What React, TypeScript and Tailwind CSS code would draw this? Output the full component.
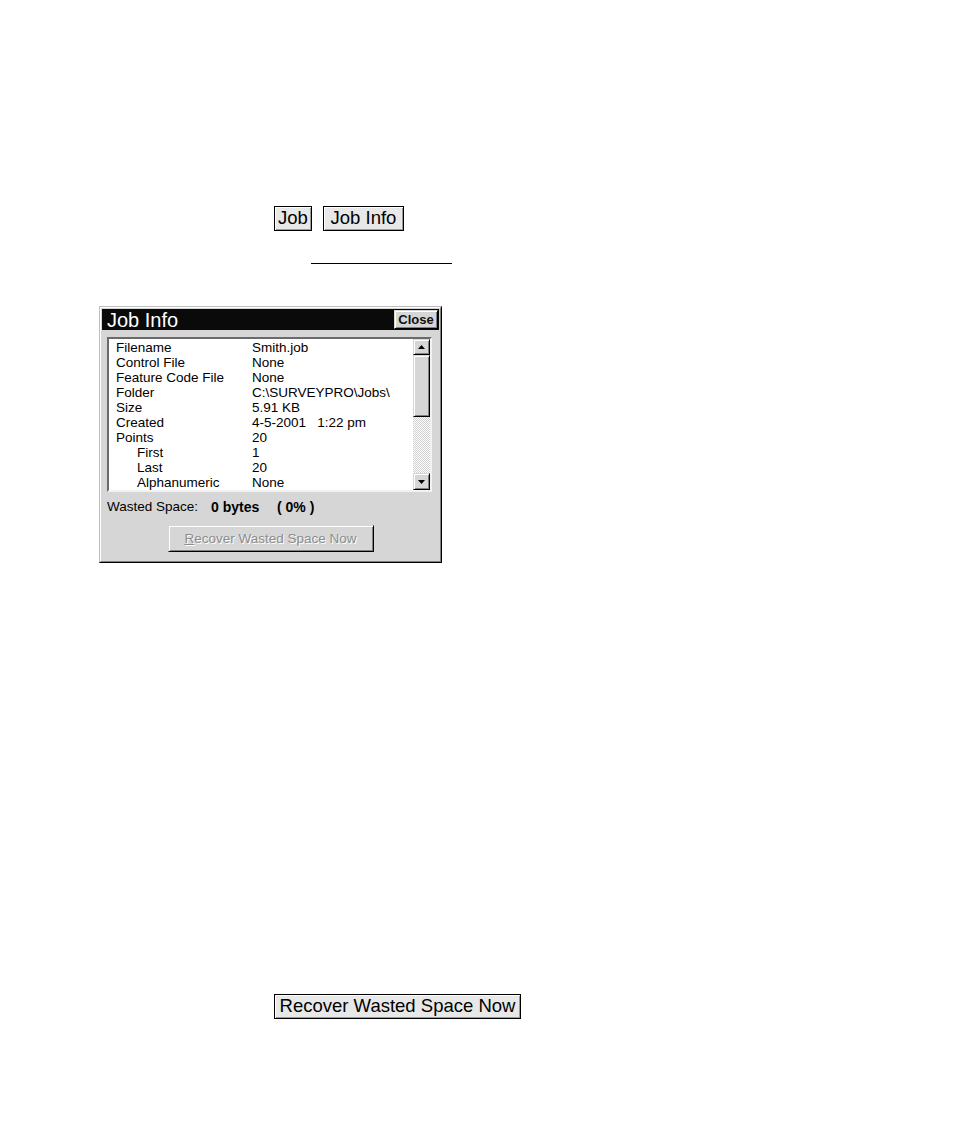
import React from "react";

const rows: [string, string, boolean][] = [
  ["Filename", "Smith.job", false],
  ["Control File", "None", false],
  ["Feature Code File", "None", false],
  ["Folder", "C:\\SURVEYPRO\\Jobs\\", false],
  ["Size", "5.91 KB", false],
  ["Created", "4-5-2001   1:22 pm", false],
  ["Points", "20", false],
  ["First", "1", true],
  ["Last", "20", true],
  ["Alphanumeric", "None", true],
];

const bevel =
  "bg-[#d6d6d6] border border-t-[#d6d6d6] border-l-[#d6d6d6] border-r-black border-b-black shadow-[inset_1px_1px_0_#ffffff,inset_-1px_-1px_0_#808080]";

function Arrow({ up }: { up: boolean }) {
  return (
    <svg width="7" height="4" viewBox="0 0 7 4">
      <path d={up ? "M0 4 L3.5 0 L7 4Z" : "M0 0 L3.5 4 L7 0Z"} fill="#000" />
    </svg>
  );
}

function TopButton({ label, w }: { label: string; w: string }) {
  return (
    <div
      className={`${w} h-[25px] flex items-center justify-center border border-black bg-[#e8e8e8] shadow-[inset_1px_1px_0_#ffffff,inset_-1px_-1px_0_#9a9a9a] text-[18.5px] leading-none text-black`}
    >
      {label}
    </div>
  );
}

export default function App() {
  return (
    <div className="w-[954px] h-[1146px] bg-white overflow-hidden font-['Liberation_Sans',Arial,sans-serif] text-black">
      <div className="pt-[206px] pl-[274px] flex gap-[11px]">
        <TopButton label="Job" w="w-[38px]" />
        <TopButton label="Job Info" w="w-[81px]" />
      </div>
      <div className="mt-[32px] ml-[311px] w-[141px] h-px bg-black" />

      {/* window */}
      <div className="mt-[42px] ml-[99px] w-[343px] h-[257px] border border-t-[#bdbdbd] border-l-[#bdbdbd] border-r-black border-b-black">
        <div className="w-full h-full border border-t-white border-l-white border-r-[#808080] border-b-[#808080] bg-[#d6d6d6] p-px flex flex-col">
          <div className="h-[21px] bg-[#0a0a0a] flex items-center justify-between pl-[5px] pr-px">
            <span className="text-white text-[20px] leading-none">Job Info</span>
            <div className={`${bevel} w-[44px] h-[19px] flex items-center justify-center text-[13px] font-bold leading-none text-[#111]`}>
              Close
            </div>
          </div>

          <div className="mt-[7px] ml-[5px] w-[325px] h-[155px] border-2 border-t-[#6a6a6a] border-l-[#6a6a6a] border-r-[#f2f2f2] border-b-[#f2f2f2] bg-white flex">
            <div className="flex-1 pl-[7px] pt-px">
              {rows.map(([k, v, ind]) => (
                <div key={k} className="h-[15px] flex items-center text-[13.5px] leading-none">
                  <span className={`w-[136px] shrink-0 ${ind ? "pl-[21px]" : ""}`}>{k}</span>
                  <span className="whitespace-pre">{v}</span>
                </div>
              ))}
            </div>
            <div className="w-[17px] flex flex-col">
              <div className={`${bevel} h-[16px] flex items-center justify-center`}>
                <Arrow up />
              </div>
              <div className={`${bevel} h-[62px]`} />
              <div className="flex-1 bg-[repeating-conic-gradient(#ffffff_0%_25%,#cfcfcf_0%_50%)] bg-[length:2px_2px]" />
              <div className={`${bevel} h-[17px] flex items-center justify-center`}>
                <Arrow up={false} />
              </div>
            </div>
          </div>

          <div className="mt-[7px] ml-[5px] h-[16px] flex items-center text-[13.5px] leading-none">
            <span className="w-[104px]">Wasted Space:</span>
            <span className="font-bold w-[66px] text-[14px]">0 bytes</span>
            <span className="font-bold text-[14px] whitespace-pre">( 0% )</span>
          </div>

          <div className="mt-[10px] flex justify-center">
            <div className="w-[206px] h-[27px] border border-t-[#d6d6d6] border-l-[#d6d6d6] border-r-black border-b-black shadow-[inset_1px_1px_0_#ffffff,inset_-1px_-1px_0_#808080] flex items-center justify-center text-[13.5px] leading-none text-[#8c8c8c] [text-shadow:1px_1px_0_#ffffff]">
              <span>
                <span className="underline">R</span>ecover Wasted Space Now
              </span>
            </div>
          </div>
        </div>
      </div>

      <div className="mt-[431px] ml-[274px] w-[247px] h-[25px] flex items-center justify-center border border-black bg-[#e8e8e8] shadow-[inset_1px_1px_0_#ffffff,inset_-1px_-1px_0_#9a9a9a] text-[18.5px] leading-none">
        Recover Wasted Space Now
      </div>
    </div>
  );
}
